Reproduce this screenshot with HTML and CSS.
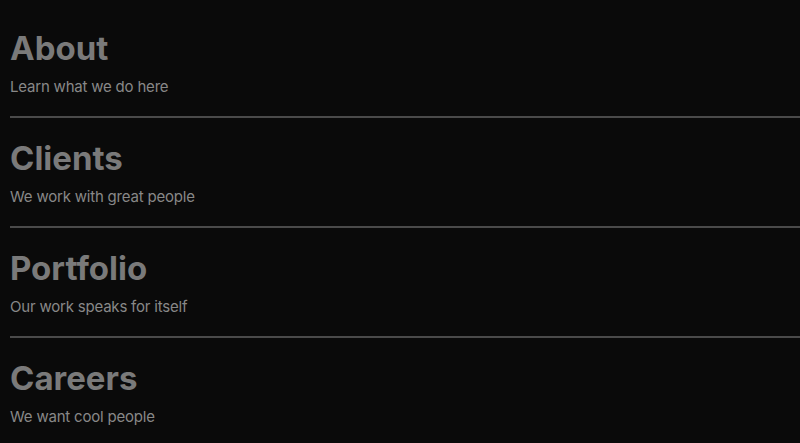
FILE: index.html
```html
<!DOCTYPE html>
<html lang="en">
  <head>
    <meta charset="UTF-8" />
    <meta name="viewport" content="width=device-width, initial-scale=1.0" />
    <title>Sections</title>
    <link rel="stylesheet" href="styles.css">
  </head>
  <body>
    <div class="list">
      <div class="item">
        <h2>About</h2>
        <p>Learn what we do here</p>
      </div>
      <div class="item">
        <h2>Clients</h2>
        <p>We work with great people</p>
      </div>
      <div class="item">
        <h2>Portfolio</h2>
        <p>Our work speaks for itself</p>
      </div>
      <div class="item">
        <h2>Careers</h2>
        <p>We want cool people</p>
      </div>
    </div>
  </body>
</html>
```

FILE: styles.css
```css
body {
  margin: 0;
  background-color: #0a0a0a;
  font-family: Inter, "Noto Sans", sans-serif;
  overflow: hidden;
}
.list {
  padding-left: 10px;
  padding-top: 28px;
}
.item {
  height: 88px;
  border-bottom: 2px solid #4a4a4a;
  margin-bottom: 20px;
}
.item:last-child {
  border-bottom: none;
  height: auto;
  margin-bottom: 0;
}
h2 {
  margin: 0;
  font-size: 33px;
  font-weight: 700;
  color: #7a7a7a;
  line-height: 40px;
}
p {
  margin: 9px 0 0;
  font-size: 15px;
  letter-spacing: -0.2px;
  color: #888;
  line-height: 20px;
}
```
